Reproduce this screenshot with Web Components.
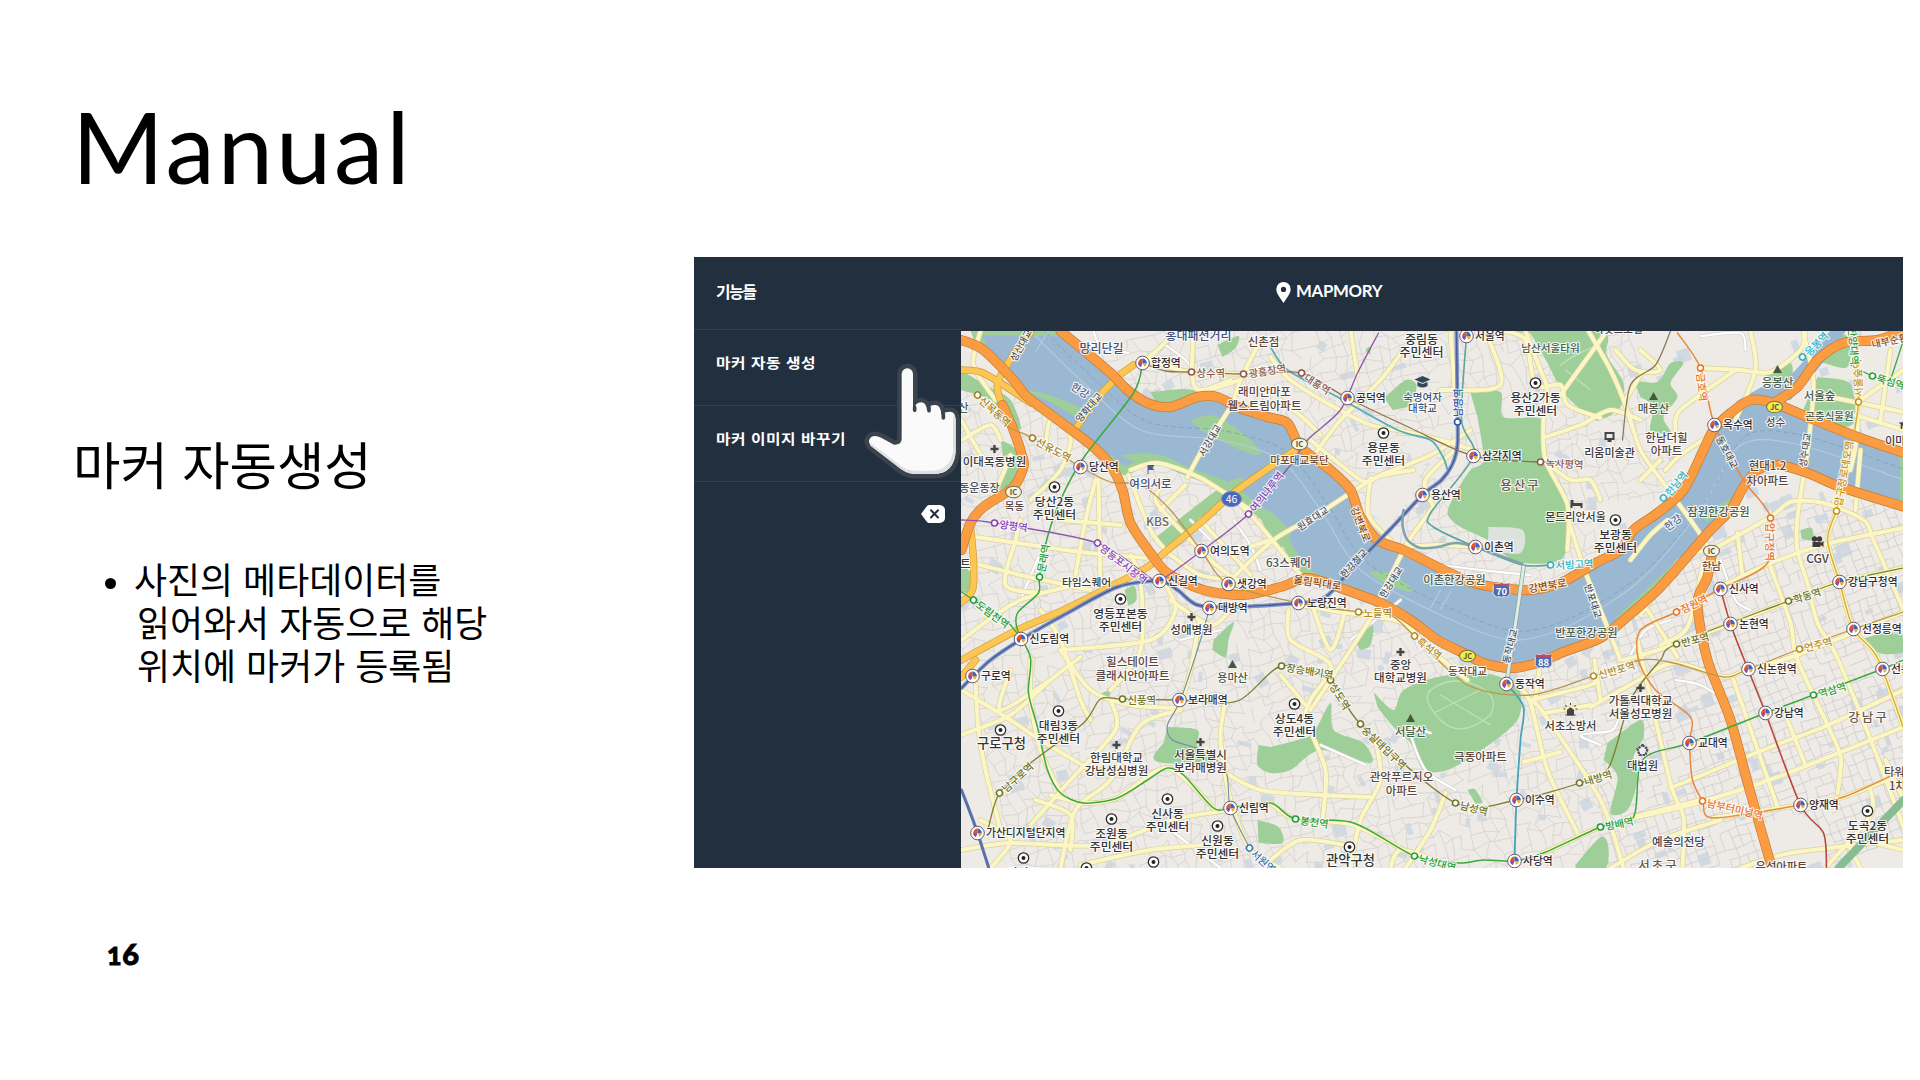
<!DOCTYPE html>
<html lang="ko">
<head>
<meta charset="utf-8">
<title>Manual</title>
<style>
html,body{margin:0;background:#fff}
body{width:1920px;height:1080px;overflow:hidden}
</style>
</head>
<body>
<manual-slide>
  <slide-title slot="title">Manual</slide-title>
  <slide-notes slot="notes">
    <span slot="heading">마커 자동생성</span>
    <span slot="l1">사진의 메타데이터를</span>
    <span slot="l2">읽어와서 자동으로 해당</span>
    <span slot="l3">위치에 마커가 등록됨</span>
  </slide-notes>
  <page-number slot="page">16</page-number>
  <app-shot slot="shot">
    <menu-row slot="head" class="head">기능들</menu-row>
    <brand-mark slot="brand">MAPMORY</brand-mark>
    <menu-row slot="menu">마커 자동 생성</menu-row>
    <menu-row slot="menu">마커 이미지 바꾸기</menu-row>
    <city-map slot="map"></city-map>
  </app-shot>
</manual-slide>
<script>
const define = (name, html, setup) => customElements.define(name, class extends HTMLElement {
  constructor() {
    super();
    const root = this.attachShadow({ mode: 'open' });
    root.innerHTML = html;
    if (setup) setup(root);
  }
});

define('manual-slide', `<style>
:host{display:grid;width:1920px;height:1080px;box-sizing:border-box;grid-template-columns:694px 1209px;grid-template-rows:257px 611px 212px;font-family:Lato,"Noto Sans CJK KR",sans-serif;color:#000;background:#fff}
.title{grid-area:1/1/2/3}.page{grid-area:3/1}
</style><div class="title"><slot name="title"></slot></div><slot name="notes"></slot><slot name="shot"></slot><div class="page"><slot name="page"></slot></div>`);

define('slide-title', `<style>
:host{display:block;padding:86px 0 0 72px;font:400 99px/120px Lato,sans-serif;letter-spacing:3px}
</style><slot></slot>`);

define('slide-notes', `<style>
:host{display:flex;flex-direction:column;padding:168px 0 0 73px;font-family:"Noto Sans CJK KR",sans-serif;white-space:nowrap}
h2{margin:0;font-size:51.5px;line-height:76px;font-weight:400}
.item{display:flex;gap:18px;margin-top:56px;padding-left:32px}
i{width:11px;height:11px;border-radius:50%;background:#000;margin-top:21px}
.lines{display:flex;flex-direction:column;font-size:35.9px;line-height:43px}
.in{padding-left:3px}
</style><h2><slot name="heading"></slot></h2>
<div class="item"><i></i><div class="lines"><span><slot name="l1"></slot></span><span class="in"><slot name="l2"></slot></span><span class="in"><slot name="l3"></slot></span></div></div>`);

define('page-number', `<style>
:host{display:block;padding:69px 0 0 107px;font:900 29px/34px Lato,sans-serif;letter-spacing:.8px;-webkit-text-stroke:.9px #000}
:host::first-letter{font-size:25px}
</style><slot></slot>`);

define('menu-row', `<style>
:host{display:flex;align-items:center;height:75px;border-bottom:1px solid #344251;padding-left:22px;color:#fff;font:700 15.8px/20px "Noto Sans CJK KR",sans-serif;letter-spacing:.5px;white-space:nowrap}
:host(.head){letter-spacing:-1.3px}
span{transform:scaleY(.88);margin-bottom:10px}
:host(.head) span{transform:none;margin-bottom:5px}
</style><span><slot></slot></span>`);

define('brand-mark', `<style>
:host{display:flex;align-items:center;gap:5px;color:#fff;font:700 16.8px/20px Lato,sans-serif;letter-spacing:-.3px}
svg{width:15px;height:21px;margin-top:3px}
</style><svg viewBox="0 0 15 21"><path fill="#fff" fill-rule="evenodd" d="M7.5 0A7.2 7.2 0 0 0 .3 7.2C.3 12 5 16.8 7.5 21 10 16.8 14.7 12 14.7 7.2A7.2 7.2 0 0 0 7.5 0ZM7.5 4.8A2.6 2.6 0 1 1 7.5 10 2.6 2.6 0 0 1 7.5 4.8Z"/></svg><slot></slot>`);

define('app-shot', `<style>
:host{display:flex;flex-direction:column;position:relative;width:1209px;height:611px;background:#222f3e;overflow:hidden}
header{display:flex;height:74px;flex:none}
.head{width:267px;height:72px;overflow:hidden;border-bottom:1px solid #344251}
.brand{display:flex;padding-left:315px;height:48px;align-items:center;padding-top:10px}
.body{display:flex;flex:1;min-height:0}
aside{width:266.5px;flex:none;display:flex;flex-direction:column;margin-top:-1px}
.clear{align-self:flex-end;margin:23px 16px 0 0;width:24px;height:18px}
.hand{position:absolute;left:165px;top:104px;width:108px;height:124px}
</style>
<header><div class="head"><slot name="head"></slot></div><div class="brand"><slot name="brand"></slot></div></header>
<div class="body"><aside><slot name="menu"></slot>
<svg class="clear" viewBox="0 0 24 18"><path fill="#fff" d="M0 9 6 1Q7 0 8 0H19Q24 1 24 5V13Q24 17 19 18H8Q7 18 6 17Z"/><path stroke="#222f3e" stroke-width="2" stroke-linecap="round" d="M10 5.3l7 7.2M17 5.3l-7 7.2"/></svg></aside>
<slot name="map"></slot></div>
<svg class="hand" viewBox="540 366 324 372"><g stroke-linejoin="round">
<path d="M668 405A17 17 0 0 1 702 405V515H706Q706 490 728 490 742 492 744 514 750 497 770 498 786 500 787 528 796 518 815 518 830 520 830 545V638Q825 703 765 705H705Q680 704 655 682L575 620Q564 603 578 593 590 587 608 597L645 617Q668 618 668 600Z" fill="#f9f9fa" stroke="#3b444d" stroke-width="27"/>
<path d="M668 405A17 17 0 0 1 702 405V515H706Q706 490 728 490 742 492 744 514 750 497 770 498 786 500 787 528 796 518 815 518 830 520 830 545V638Q825 703 765 705H705Q680 704 655 682L575 620Q564 603 578 593 590 587 608 597L645 617Q668 618 668 600Z" fill="#fafafb"/>
<path d="M575 612 655 672Q680 694 705 695H760Q812 692 822 638V530Q830 530 830 545V638Q825 703 765 705H705Q680 704 655 682L575 620Z" fill="#dfe0e4"/>
<path d="M707 505V514M750 505V515M793 525V537" stroke="#3b444d" stroke-width="11" stroke-linecap="round"/></g></svg>`);

define('city-map', `<style>
:host{display:block;width:942.5px;height:537px;flex:none;overflow:hidden}
svg{display:block}
text{font-family:"Noto Sans CJK KR",sans-serif;paint-order:stroke;stroke:#fff;stroke-opacity:.85;stroke-width:2.2px;stroke-linejoin:round}
</style><svg width="943" height="537" viewBox="960.5 331 943 537"></svg>`, root => {
  let out = '';
  const path = (d, c, w, extra = '') => out += `<path d="${d}" fill="none" stroke="${c}" stroke-width="${w}" stroke-linejoin="round" stroke-linecap="round" ${extra}/>`;
  // Smooth curve through a list of "x,y" points
  const curve = s => {
    const p = s.trim().split(/\s+/).map(a => a.split(',').map(Number));
    let d = 'M' + p[0];
    for (let i = 0; i < p.length - 1; i++) {
      const a = p[i - 1] || p[i], b = p[i], c = p[i + 1], e = p[i + 2] || c;
      d += `C${(b[0] + (c[0] - a[0]) / 7).toFixed(1)} ${(b[1] + (c[1] - a[1]) / 7).toFixed(1)} ${(c[0] - (e[0] - b[0]) / 7).toFixed(1)} ${(c[1] - (e[1] - b[1]) / 7).toFixed(1)} ${c[0]} ${c[1]}`;
    }
    return d;
  };
  let seed = 17;
  const rnd = () => (seed = (seed * 16807) % 2147483647) / 2147483647;

  out += '<rect x="960" y="330" width="944" height="540" fill="#eeebe6"/>';
  // Building blocks
  for (let i = 0; i < 300; i++) {
    const x = 960 + rnd() * 943, y = 331 + rnd() * 537, w = 4 + rnd() * 11, h = 4 + rnd() * 10;
    out += `<rect x="${x.toFixed(1)}" y="${y.toFixed(1)}" width="${w.toFixed(1)}" height="${h.toFixed(1)}" fill="#c9d5e1" opacity=".8" transform="rotate(${x > 1600 ? -20 : -30 + (i % 5) * 15} ${x.toFixed(1)} ${y.toFixed(1)})"/>`;
  }
  // Minor street meshes
  const mesh = (x0, y0, nx, ny, st, jit, rot) => {
    const pts = [], r = rot * Math.PI / 180;
    for (let j = 0; j <= ny; j++) { pts[j] = []; for (let i = 0; i <= nx; i++) {
      const x = i * st + (rnd() - .5) * jit, y = j * st + (rnd() - .5) * jit;
      pts[j][i] = [(x0 + x * Math.cos(r) - y * Math.sin(r)).toFixed(1), (y0 + x * Math.sin(r) + y * Math.cos(r)).toFixed(1)];
    } }
    let d = '';
    for (let j = 0; j <= ny; j++) for (let i = 0; i <= nx; i++) {
      if (i < nx && rnd() < .78) d += `M${pts[j][i]}L${pts[j][i + 1]}`;
      if (j < ny && rnd() < .78) d += `M${pts[j][i]}L${pts[j + 1][i]}`;
    }
    return d;
  };
  const m0 = mesh(820, 300, 30, 66, 11, 9, -14), m1 = mesh(900, 400, 66, 60, 11, 9, -14), m2 = mesh(1500, 620, 46, 36, 9.5, 2.5, -20);
  out += '<clipPath id="w"><path d="M960 330H1903V500H1600V870H960Z"/></clipPath><clipPath id="e"><path d="M1600 500H1904V870H1600Z"/></clipPath>';
  path(m1, '#d9d6d4', 1, 'clip-path="url(#w)"');
  path(m2, '#d4d2d3', 1, 'clip-path="url(#e)"');

  const poly = (s, c) => out += `<path d="${curve(s)}Z" fill="${c}"/>`;
  const G = '#9fcf98';
  // Open flat ground
  ['1370,505 1375,480 1400,470 1420,480 1400,510 1385,530', '1405,440 1440,430 1440,450 1415,470', '1750,830 1800,815 1830,850 1800,868 1770,868', '1700,355 1740,350 1750,380 1725,400'].forEach(s => poly(s, '#eeebe6'));
  // Parks and hills
  ['1470,393 1500,392 1503,417 1543,420 1543,457 1552,472 1567,500 1563,557 1517,562 1487,540 1460,527 1447,513 1457,490 1470,470 1483,460 1477,417',
   '1497,331 1600,331 1606,355 1623,383 1620,407 1600,420 1590,417 1563,393 1547,363 1530,333',
   '1633,380 1657,382 1670,363 1683,363 1670,383 1677,397 1663,417 1670,433 1650,430 1653,407 1640,397',
   '1373,692 1393,710 1403,690 1437,677 1483,673 1517,687 1517,720 1477,753 1447,770 1423,770 1410,743 1393,727 1377,707',
   '1270,747 1297,740 1313,733 1330,703 1333,730 1363,743 1370,763 1320,750 1290,770 1270,773 1257,765 1258,745',
   '1167,727 1197,730 1197,747 1213,763 1163,763 1153,757 1163,743', '1257,820 1278,827 1282,843 1258,843',
   '1607,743 1640,720 1643,737 1633,757 1637,780 1627,810 1610,813 1617,777 1603,760', '1575,865 1600,837 1608,847 1604,870 1575,870',
   '1860,640 1880,634 1903,636 1903,652 1883,654 1868,648', '1817,377 1850,384 1853,423 1830,425 1803,409', '1822,345 1845,335 1850,355 1845,368 1820,362', '1763,372 1790,363 1790,383 1775,388',
   '1213,640 1233,622 1228,640 1225,657 1212,650', '1384,398 1405,380 1416,385 1410,405 1392,410', '1150,392 1185,389 1200,394 1170,402 1155,402', '1217,345 1238,336 1235,348 1222,357',
   '1124,590 1134,586 1136,600 1128,606', '1352,638 1372,625 1370,645 1360,650', '1800,530 1811,528 1812,540 1801,539', '1467,790 1474,789 1482,802 1475,804', '960,370 985,385 1010,400 1020,430 990,400 960,390', '1000,440 1015,450 1015,480 995,490 1005,470', '960,565 972,575 968,592 960,592', '1370,355 1365,350 1370,346', '1097,695 1110,690 1108,698'].forEach(s => poly(s, G));
  poly('1488,527 1522,530 1520,553 1487,550', '#dde3dc');
  path('M1430 690Q1450 675 1475 685T1490 715Q1460 740 1440 720T1430 690M1440 695L1490 725M1435 712Q1460 700 1480 690M1560 365Q1580 350 1600 345M1565 370 1590 390', '#c0dfba', 1.3);

  const NORTH = '1060,331 1083,350 1110,373 1127,390 1147,403 1170,407 1197,397 1217,397 1237,407 1267,417 1287,423 1300,447 1330,470 1350,490 1360,517 1377,540 1403,550 1437,567 1470,582 1500,588 1530,590 1560,583 1597,562 1620,550 1633,530 1657,513 1683,490 1703,450 1713,430 1730,413 1750,400 1773,403 1807,417 1857,437 1904,453';
  const SOUTH = '1904,507 1840,487 1807,473 1777,465 1757,470 1743,487 1730,510 1710,530 1690,553 1657,590 1623,620 1597,640 1563,652 1537,663 1510,668 1483,664 1467,655 1437,640 1410,620 1380,603 1337,587 1307,573 1290,551 1280,533 1253,507 1227,487 1183,470 1157,459 1135,466 1122,470 1093,447 1067,427 1027,397 1013,380 983,348 975,331';
  out += `<path d="${curve(NORTH)}L${curve(SOUTH).slice(1)}Z" fill="#9bb8d2" stroke="${G}" stroke-width="9"/>`;
  poly('1735,402 1765,385 1790,375 1830,331 1845,331 1815,372 1790,400', '#9bb8d2');
  // Riverside greens and islets
  ['1020,389 1045,394 1080,408 1082,420 1050,402', '1190,420 1215,416 1250,440 1260,455 1235,448 1200,430', '1120,456 1145,453 1170,462 1140,464', '1367,572 1385,572 1408,585 1410,592 1385,585', '1615,618 1640,595 1680,558 1690,556 1650,597 1625,622', '1152,540 1228,482 1240,488 1164,549', '1255,507 1270,512 1290,533 1280,548 1270,540', '1700,515 1735,497 1730,508 1706,522'].forEach(s => poly(s, G));
  const flow = '1035,336 1080,380 1140,430 1220,440 1280,460 1320,510 1360,570 1440,615 1510,640 1570,625 1640,580 1700,510 1740,445 1800,445 1903,480';
  path(curve(flow), '#b2cbdf', 1.2); path(curve(flow), '#86a2bd', 1, 'stroke-dasharray="4 4" transform="translate(5 -9)"');
  path('M1048 331 1035 352M1430 608 1440 590M1440 609 1450 592', '#b2cbdf', 1.2);

  const road = (list, fill, edge, w) => { list.forEach(s => path(curve(s), edge, w + 1.4)); list.forEach(s => path(curve(s), fill, w)); };
  road(['1093,331 1100,345 1128,353', '1165,345 1185,360 1195,375', '1700,336 1740,333 1745,350', '1260,570 1250,545 1233,520', '1210,540 1190,520', '1043,545 1020,600', '1180,640 1220,630', '1430,733 1410,730 1425,770 1455,790', '1320,745 1365,765', '1600,745 1580,735 1612,730 1620,710', '1675,680 1700,685 1725,700', '1630,655 1645,630 1670,620', '1350,640 1400,600', '1440,565 1480,570 1530,575', '1720,560 1735,600 1750,610', '1170,830 1220,868'], '#fff', '#d5d2d0', 2.2);
  // Yellow streets
  road(['980,331 973,365 995,400', '1010,455 1000,480 990,500', '961,420 985,460 1010,460', '961,440 990,425 1000,440', '1045,450 1050,420 1070,437 1060,470 1030,500', '961,535 1010,542 1080,552 1145,558', '961,560 1020,575 1090,590', '1020,520 1015,540 1005,585 1040,593', '1095,480 1085,520 1075,575', '1060,520 1120,525', '1130,555 1140,580 1140,650 1110,690', '1098,480 1100,590', '961,640 1020,600 1100,580', '1040,610 1060,640 1080,700 1090,720', '961,690 1010,720 1040,740 1090,770', '975,680 978,730 985,770 1000,830', '1010,670 1000,710 1050,680', '1030,658 1030,700 1040,750 1060,793', '1080,657 1050,680 1010,715 960,735', '1110,700 1115,730 1070,780 1030,825', '1060,650 1090,690 1130,705 1180,708', '1180,710 1140,725 1110,780 1075,810 1060,868', '1050,795 1083,803 1117,798 1167,768 1213,808', '1035,800 1070,815 1070,850', '961,850 1010,843 1100,845 1170,820 1230,810', '1080,865 1150,850 1230,843', '990,868 1010,840 980,820', '1225,700 1220,740 1230,800 1250,850 1280,868', '1220,770 1260,790 1320,795 1370,797', '1270,803 1295,819 1353,825 1414,856', '1165,585 1175,610 1150,640 1060,650', '1170,600 1210,625 1230,610', '1199,620 1190,670 1180,705', '1288,610 1290,640 1330,665 1310,700 1306,720 1325,770 1322,820', '1310,600 1330,650 1345,610', '1380,603 1350,650 1330,680 1310,710', '1300,605 1340,612 1400,622 1430,650 1467,680', '1280,675 1305,705', '1350,330 1357,375', '1375,740 1380,780 1360,820 1350,868', '1445,793 1430,830 1405,868', '1270,860 1300,840 1345,845', '1390,868 1400,850 1440,862',
    '1270,357 1290,380 1330,405 1370,425 1397,430', '1260,340 1240,380 1230,407 1200,453 1187,477', '1193,331 1195,388 1240,380', '1205,390 1230,380', '1150,360 1190,372 1265,374', '1142,363 1160,347 1175,331', '1403,350 1380,380 1340,420 1310,460', '1280,400 1305,420 1320,435', '1397,430 1440,440 1473,450', '1440,390 1500,385 1485,331', '1450,331 1455,400', '1380,475 1430,455 1470,430', '1310,440 1360,480 1375,478', '1433,507 1425,480 1460,445', '1413,470 1377,477 1350,493 1313,517 1273,540 1230,580', '1370,478 1368,515 1390,540', '1433,507 1407,543 1380,597', '1390,547 1440,545 1475,547', '1525,331 1540,370 1547,390 1543,420 1545,460 1567,505 1567,550', '1503,331 1525,340 1535,385 1560,385 1567,405 1600,418', '1545,437 1580,425 1610,410 1640,420', '1560,395 1600,340 1606,331', '1588,331 1610,370 1625,405 1640,450 1663,483 1697,530 1717,563', '1545,462 1570,480 1590,480 1600,500', '1567,517 1583,567 1600,610 1620,660', '1615,350 1635,370 1660,370 1640,350', '1665,470 1680,455 1710,435', '1640,375 1625,400', '1700,368 1740,370 1770,372 1800,350 1805,331', '1750,331 1755,370 1735,420', '1735,370 1680,410 1675,430', '1803,333 1813,383 1807,450 1797,517 1797,550 1807,583 1817,623 1837,658 1873,747 1903,827', '1855,415 1903,430', '1890,350 1880,420', '1820,395 1903,412', '1855,345 1857,430 1850,470', '1860,400 1903,370',
    '1630,560 1650,535 1667,520', '1640,480 1660,460', '1130,470 1157,463 1200,478 1250,510', '1128,475 1150,530 1165,550', '1230,495 1255,520 1300,575', '1160,510 1185,485', '1167,480 1155,500 1180,530 1210,560 1235,580', '1200,520 1250,575', '1164,550 1200,575 1240,580', '1240,550 1270,540',
    '1670,788 1770,747 1823,727 1903,690', '1633,818 1700,802 1777,777 1903,727', '1713,818 1800,805 1843,797 1903,773', '1590,707 1633,683 1673,663 1723,677 1748,669 1797,655 1903,612', '1623,660 1676,644 1788,601 1839,582 1903,568', '1720,587 1770,563 1830,543 1903,528', '1717,547 1770,517 1790,502 1823,503 1863,520 1873,540 1903,610', '1737,533 1742,577', '1770,567 1790,623 1797,660 1837,747 1840,770 1837,793', '1733,680 1777,807', '1785,715 1805,765', '1637,640 1670,783 1683,817 1682,867', '1703,563 1687,627 1660,645', '1647,610 1677,657', '1517,685 1530,703 1547,770 1577,833', '1530,700 1543,713 1600,800 1623,868', '1530,700 1590,685 1593,676', '1594,660 1600,700', '1545,713 1590,705', '1523,762 1560,752', '1540,660 1535,700', '1640,615 1680,560 1710,550', '1825,868 1870,815 1870,790', '1860,868 1850,840 1903,850', '1740,868 1790,853 1903,840', '1610,868 1660,840 1720,820', '1543,853 1600,827 1633,817 1700,800', '1885,760 1903,800', '1850,450 1836,511 1827,540 1839,582 1853,629 1877,658 1903,728', '1860,450 1855,510'], '#fbf6c3', '#d9d3a4', 4);
  road(['961,370 980,372 1000,383 1030,403', '1030,333 1013,355 997,383 1002,407', '1133,365 1117,377 1093,403 1073,432', '961,660 1017,630 1063,610 1117,583 1147,567 1167,550 1203,520 1233,493 1280,460 1300,447', '961,677 975,660', '970,527 973,560 972,590 960,603'], '#fdc552', '#cf9d3d', 6);
  // Expressways
  const R = ['961,340 983,350 1013,380 1027,397 1067,427 1093,447 1110,465 1122,490 1130,523 1150,553 1167,573 1203,590 1243,595 1280,587 1307,578 1337,587 1380,603 1410,620 1437,640 1467,655 1483,663 1510,668 1537,663 1563,652 1600,638 1623,620 1657,590 1690,553 1710,530 1730,510 1743,487 1757,470 1777,465 1807,473 1840,487 1904,507', NORTH, '1773,403 1797,387 1817,360 1843,343 1877,340 1904,330', '1002,405 1013,430 1022,457 1023,467 1013,487 983,507 970,523 961,550', '1712,550 1707,577 1697,603 1707,660 1730,720 1750,793 1772,870'];
  road(R, '#fb9c42', '#c47c36', 8.6);
  path('M1838 868 1903 800', '#88bd91', 8);

  // Rail and subway lines
  const line = (s, c, w = 1.3) => path(curve(s), c, w);
  const B = '961,688 990,660 1023,638 1067,613 1117,587 1159,581 1177,590 1197,605 1233,607 1298,603 1325,597 1350,570 1390,529 1422,495 1441,480 1452,464 1457,445 1457,410 1456,332';
  line(B, '#7e95c4', 4); line(B, '#4a5b9c', 1.4); line('961,790 975,827 988,867', '#5a6faf', 3);
  line('1142,363 1133,393 1083,458 1060,500 1047,537 1039,577 1038,593 1017,613 1017,630 1030,658 1028,693 1037,727 1047,770 1060,793 1083,803 1117,798 1147,780 1167,768 1183,775 1213,808 1230,808 1270,803 1295,819 1353,823 1414,856 1457,863 1483,860 1514,861 1543,853 1600,827 1633,817 1642,760 1689,743 1765,713 1813,695 1882,669 1903,660', '#3da83f', 1.5);
  line('961,592 973,600 1005,620 1020,638', '#3da83f'); line('1850,365 1872,376 1903,386', '#3da83f'); line('1903,340 1890,380', '#3da83f');
  line('961,520 994,523 1097,543 1150,578 1159,581 1201,551 1248,514 1290,465 1307,440 1340,410 1357,373 1378,333', '#8d58a8');
  line('1270,347 1287,370 1337,397 1397,430 1430,440 1443,458 1447,470', '#54adb8', 1.8);
  line('1142,363 1165,371 1190,372 1243,374 1300,373 1347,398 1410,428 1473,456 1540,462 1575,460', '#927347');
  line('1466,336 1461,420 1473,456 1430,513 1433,527 1475,547 1522,565 1550,565', '#5aa79e', 1.6);
  line('1403,510 1402,525 1407,540 1420,548 1437,547 1455,543 1475,547 1522,564', '#7fa3ad', 2.6);
  road(['1523,567 1517,610 1506,684'], '#dfeae2', '#7ba69c', 3);
  line('1506,684 1523,707 1520,740 1516,800 1514,861', '#44a3bd', 1.8);
  line('988,827 999,793 1030,763 1083,723 1100,699 1122,699 1179,700 1237,701 1281,666 1330,680 1360,724 1455,803 1516,800 1579,783 1608,768 1630,700 1660,660 1676,644 1788,601 1839,582 1903,568', '#7d7d33');
  line('977,395 1005,425 1032,438 1080,467 1110,482 1140,485 1170,510 1201,551 1228,584 1298,603 1358,612 1390,615 1414,636 1467,685 1530,695 1593,676 1640,660 1673,663 1723,677 1748,669 1799,649 1853,629 1903,612', '#bd9647');
  line('1677,333 1700,368 1714,425 1743,480 1770,517 1767,563 1720,589 1676,612 1640,630 1638,660 1655,690 1690,717 1689,743 1692,780 1702,801 1713,818 1800,805 1843,797 1903,770', '#e58a40', 1.5);
  line('1720,589 1730,624 1743,658 1765,713 1800,805 1823,833 1826,868', '#b8473c', 1.6);
  line('1836,511 1827,540 1839,582 1853,629 1877,658 1903,728', '#dcae38', 1.5);
  line('1855,335 1858,402 1850,450 1836,511', '#dcae38', 1.5);
  line('1209,608 1200,640 1180,700 1167,725 1172,740 1200,750 1225,770 1230,808 1249,848', '#718ca7', 1.1);
  line('1670,331 1655,365 1630,385 1622,440', '#8c7b5e');

  const text = (x, y, t, s = 12, c = '#39322f', rot = 0, anchor = 'middle', extra = '') => out += `<text x="${x}" y="${y}" font-size="${s}" fill="${c}" text-anchor="${anchor}" font-weight="500" ${rot ? `transform="rotate(${rot} ${x} ${y})"` : ''} ${extra}>${t}</text>`;
  const mid = (x, y, t, s, c, rot) => text(x, y, t, s, c, rot, 'middle', 'dominant-baseline="central"');

  // Names of roads, bridges, water
  [[1361,524,'강변북로',10,'#8a4a10',68],[1317,582,'올림픽대로',10.5,'#8a4a10',8],[1547,585,'강변북로',10.5,'#8a4a10',-10],[1889,340,'내부순환',10,'#8a4a10',-12],
   [1020,345,'성산대교',9.5,'#4c545e',-62],[1088,407,'양화대교',9.5,'#4c545e',-50],[1080,390,'한강',10.5,'#53698f',32],[1209,440,'서강대교',9.5,'#4c545e',-60],[1312,518,'원효대교',9.5,'#4c545e',-33],[1353,563,'한강철교',9.5,'#4c545e',-48],[1390,582,'한강대교',9.5,'#4c545e',-58],[1509,646,'동작대교',9.5,'#4c545e',-76],[1593,601,'반포대교',9.5,'#4c545e',72],[1727,452,'동호대교',9.5,'#4c545e',62],[1804,450,'성수대교',9.5,'#4c545e',-82],[1672,522,'한강',10.5,'#53698f',-38]].forEach(a => mid(...a));

  // Line stations: hollow dot with the name running along the track
  [[1191,372,'상수역','#8c5a4a',0],[1243,374,'광흥창역','#8c5a4a',-9],[1301,373,'대흥역','#8c5a4a',33],[977,395,'신목동역','#a0801f',42],[1032,438,'선유도역','#a0801f',28],[994,523,'양평역','#8743b8',7],[1097,543,'영등포시장역','#8743b8',38],[1248,514,'여의나루역','#8743b8',-52],[1039,577,'문래역','#1f9c35',-80],[973,600,'도림천역','#1f9c35',36],[1358,612,'노들역','#b08a24',0],[1414,636,'흑석역','#b08a24',38],[1540,462,'녹사평역','#8c5a4a',3],[1550,565,'서빙고역','#2fb0be',-3],[1457,422,'남영역','#2d55a8',-90],[1663,498,'한남역','#2fb0be',-50],[1700,368,'금호역','#e87426',84],[1802,357,'응봉역','#2fb0be',-45],[1872,376,'뚝섬역','#1f9c35',16],[1858,402,'서울숲역','#c99516',-93],[1770,518,'압구정역','#e87426',90],[1836,511,'압구정로데오역','#c99516',-80],[1676,612,'잠원역','#e87426',-26],[1676,644,'반포역','#6f7420',-15],[1788,601,'학동역','#6f7420',-18],[1799,649,'언주역','#b08a24',-15],[1593,676,'신반포역','#b08a24',-16],[1813,695,'역삼역','#1f9c35',-17],[1702,801,'남부터미널역','#e87426',13],[1600,827,'방배역','#1f9c35',-12],[1579,783,'내방역','#6f7420',-17],[1455,803,'남성역','#6f7420',15],[1360,724,'숭실대입구역','#6f7420',44],[1330,680,'상도역','#6f7420',58],[1281,666,'장승배기역','#6f7420',9],[1295,819,'봉천역','#1f9c35',8],[1414,856,'낙성대역','#1f9c35',16],[1122,699,'신풍역','#6f7420',0],[999,793,'남구로역','#6f7420',-42],[1249,848,'서원역','#3b74b8',42],[1852,322,'한양대역','#1f9c35',86]].forEach(([x, y, t, c, r]) => {
    out += `<g transform="translate(${x} ${y}) rotate(${r})"><circle r="3" fill="#fff" stroke="${c}" stroke-width="1.5"/><text x="5" y="0" dominant-baseline="central" font-size="10.3" font-weight="500" fill="${c}">${t}</text></g>`;
  });

  // Transfer stations
  [[1142,363,'합정역'],[1347,398,'공덕역'],[1466,336,'서울역'],[1473,456,'삼각지역'],[1422,495,'용산역'],[1475,547,'이촌역'],[1298,603,'노량진역'],[1080,467,'당산역'],[1201,551,'여의도역'],[1159,581,'신길역'],[1228,584,'샛강역'],[1209,608,'대방역'],[1020.5,639,'신도림역'],[1714,425,'옥수역'],[1720,589,'신사역'],[1839,582,'강남구청역'],[1730,624,'논현역'],[1853,629,'선정릉역'],[972,676,'구로역'],[1179,700,'보라매역'],[977,833,'가산디지털단지역'],[1230,808,'신림역'],[1506,684,'동작역'],[1516,800,'이수역'],[1514,861,'사당역'],[1748,669,'신논현역'],[1765,713,'강남역'],[1689,743,'교대역'],[1800,805,'양재역'],[1882,669,'선릉역']].forEach(([x, y, t]) => {
    out += `<g transform="translate(${x} ${y})"><circle r="6.8" fill="#fff" stroke="#665b63" stroke-width="1"/><path d="M-4.4 0A4.4 4.4 0 0 1 0-4.4V0Z" fill="#e2552f"/><path d="M-4.4 0A4.4 4.4 0 0 0-1.5 4.1L0 0Z" fill="#8a4fa0"/><path d="M0-4.4A4.4 4.4 0 0 1 4.4 0H0Z" fill="#3a66c4"/><path d="M0 0H4.4A4.4 4.4 0 0 1 2 3.8Z" fill="#eda733"/></g>`;
    text(x + 8.5, y + 4.2, t, 10.8, '#332d31', 0, 'start');
  });

  // District offices
  [[1535,383,'용산2가동','주민센터'],[1383,433,'용문동','주민센터'],[1054,487,'당산2동','주민센터'],[1120,599,'영등포본동','주민센터'],[1615,520,'보광동','주민센터'],[1058,711,'대림3동','주민센터'],[1000,730,'구로구청'],[1167,799,'신사동','주민센터'],[1111,819,'조원동','주민센터'],[1217,826,'신원동','주민센터'],[1023,858,'가산동'],[1086,868,''],[1153,862,''],[1294,704,'상도4동','주민센터'],[1349,847,'관악구청'],[1867,811,'도곡2동','주민센터']].forEach(([x, y, a, b]) => {
    out += `<circle cx="${x}" cy="${y}" r="5.2" fill="#fff" stroke="#2b2b2b" stroke-width="1.3"/><circle cx="${x}" cy="${y}" r="2" fill="#222"/>`;
    const one = a.endsWith('구청');
    if (a) text(x + (one ? 1 : 0), y + (one ? 17.5 : 18.5), a, one ? 13.3 : 11.8, '#333');
    if (b) text(x, y + 32, b, 11.8, '#333');
  });

  // Hospitals
  [[994,449,'이대목동병원'],[1191,617,'성애병원'],[1400,652,'중앙','대학교병원'],[1116,745,'한림대학교','강남성심병원'],[1200,742,'서울특별시','보라매병원'],[1640,688,'가톨릭대학교','서울성모병원']].forEach(([x, y, a, b]) => {
    path(`M${x - 4} ${y}h8M${x} ${y - 4}v8`, '#444', 2.4, 'style="stroke-linecap:butt"');
    text(x, y + 17, a, 11.5, '#403a3a'); if (b) text(x, y + 30, b, 11.5, '#403a3a');
  });

  // Places
  const br = '#5a4640', gy = '#4a5460', nv = '#45527c', gr = '#4b5d4b';
  [[1101,347,'망리단길',12,nv],[1198,334,'홍대패션거리',12,nv],[1263,341,'신촌점',11.5,br],[1264,391,'래미안마포',11.5,br],[1264,405,'웰스트림아파트',11.5,br],[1422,396,'숙명여자',10.5,'#3f5770'],[1422,407.5,'대학교',10.5,'#3f5770'],[1421,338,'중림동',12,'#333'],[1421,351.5,'주민센터',12,'#333'],[1550,347,'남산서울타워',10.6,gr],[1609,452,'리움미술관',11,'#403a3a'],[1653,408,'매봉산',11.5,gr],[1666,437,'한남더힐',11.5,br],[1666,450,'아파트',11.5,br],[1777,382,'응봉산',11.5,gr],[1819,395,'서울숲',11.5,gr],[1829,415,'곤충식물원',10.5,gr],[1775,421,'성수',10.5,br],[1767,465,'현대1.2',11.5,br],[1767,480,'차아파트',11.5,br],[1718,511,'잠원한강공원',11.3,gr],[1817,557,'CGV',12,'#4a4444'],[1711,565,'한남',10.5,br],[1299,459,'마포대교북단',10.6,'#6b4b35'],[1150,483,'여의서로',11.5,nv],[1157,520,'KBS',12,'#6b6660'],[1288,562,'63스퀘어',11.5,gy],[1086,581,'타임스퀘어',10.7,'#403a3a'],[1014,505,'목동',10.5,br],[979,487,'동운동장',11,gy],[1575,516,'몬드리안서울',11,'#403a3a'],[1454,579,'이촌한강공원',11.3,gr],[1586,632,'반포한강공원',11.3,gr],[1132,661,'힐스테이트',11.5,br],[1132,675,'클래시안아파트',11.5,br],[1232,677,'용마산',11,gr],[1467,670,'동작대교',10.6,'#6b4b35'],[1410,731,'서달산',11.3,gr],[1480,756,'극동아파트',11.5,br],[1401,776,'관악푸르지오',11.5,br],[1401,790,'아파트',11.5,br],[1570,725,'서초소방서',11.3,'#403a3a'],[1642,765,'대법원',11.3,'#403a3a'],[1678,841,'예술의전당',11.5,'#434558'],[1781,866,'우성아파트',11.3,br],[1899,771,'타워팰',11.3,br],[1897,785,'1차',11.3,br],[1900,440,'이마트',11.3,'#403a3a'],[965,563,'트',11.3,'#403a3a'],[963,407,'산',11.3,gr],[1618,328,'하얏트호텔',10.5,'#403a3a']].forEach(a => mid(...a));
  [[1519,484,'용산구'],[1867,716,'강남구'],[1657,864,'서초구']].forEach(([x, y, t]) => text(x + 1, y, t, 12.5, '#6b5850', 0, 'middle', 'dominant-baseline="central" letter-spacing="2"'));

  // Mountain peaks
  [[1653,396],[1777,369],[1232,664],[1410,718]].forEach(([x, y]) => out += `<path d="M${x} ${y - 4}l4.5 8h-9z" fill="#44593f"/>`);
  // Point-of-interest glyphs
  out += `<g fill="#30475c"><path d="M1422 376l8 3.5-8 3.5-8-3.5z"/><path d="M1417 382v4q5 3 10 0v-4l-5 2z"/></g>
<path d="M1147 474v-9h7l-2 3 2 2h-6v4z" fill="#4b5a90"/>
<path fill-rule="evenodd" fill="#444" d="M1604 432h10v8h-3v2h-4v-2h-3zM1606 434v4h6v-4z"/>
<path d="M1570 508v-8h3v3h9v5h-2v-2h-8v2z" fill="#444"/>
<g fill="#3e3a3a"><circle cx="1814" cy="539" r="2.7"/><circle cx="1819" cy="539" r="2.7"/><path d="M1812 542h8v1l3-2v6l-3-2v2h-8z"/></g>
<path d="M1567 715v-5q3-4 6 0v5zM1565 715h10M1570 703v2M1565 705l1 2M1575 705l-1 2M1563 709h2M1575 709h2" fill="#444" stroke="#444" stroke-width="1"/>
<path d="M1642 745l5 4-2 6h-6l-2-6z" fill="#eee" stroke="#47505c" stroke-width="2.2" stroke-dasharray="2.5 .8"/>
<path d="M1899 423h3l2 5h4M1901 423v6" stroke="#444" stroke-width="1.6" fill="none"/>`;

  // Route shields and interchanges
  out += '<ellipse cx="1231" cy="499" rx="10" ry="7.6" fill="#4967bd" stroke="#6f87c8"/><text x="1231" y="503" style="stroke:none" font-size="10.5" text-anchor="middle" fill="#fff">46</text>';
  [[1501,590,'70'],[1543,661,'88']].forEach(([x, y, t]) => out += `<g transform="translate(${x} ${y})"><path d="M-8-7Q-4-5 0-7 4-5 8-7L8.5 4 5 7Q0 6 0 7.5-1 6-5 7L-8.5 4Z" fill="#4f6aae" stroke="#dfe4ef"/><path d="M-8-7Q-4-5 0-7 4-5 8-7V-4H-8Z" fill="#ba4c64"/><text y="5" style="stroke:none" font-size="9.5" font-weight="700" text-anchor="middle" fill="#fff">${t}</text></g>`);
  [[1299,444,'IC'],[1013,492,'IC'],[1711,551,'IC'],[1774,407,'JC',1],[1467,656,'JC',1]].forEach(([x, y, t, k]) => out += `<ellipse cx="${x}" cy="${y}" rx="8" ry="5.8" fill="${k ? '#f1ee45' : '#f6f3df'}" stroke="#77715a" stroke-width="1.1"/><text x="${x}" y="${y + 3}" style="stroke:none" font-size="7.5" font-weight="700" text-anchor="middle" fill="#55523f">${t}</text>`);

  root.querySelector('svg').innerHTML = out;
});
</script>
</body>
</html>
